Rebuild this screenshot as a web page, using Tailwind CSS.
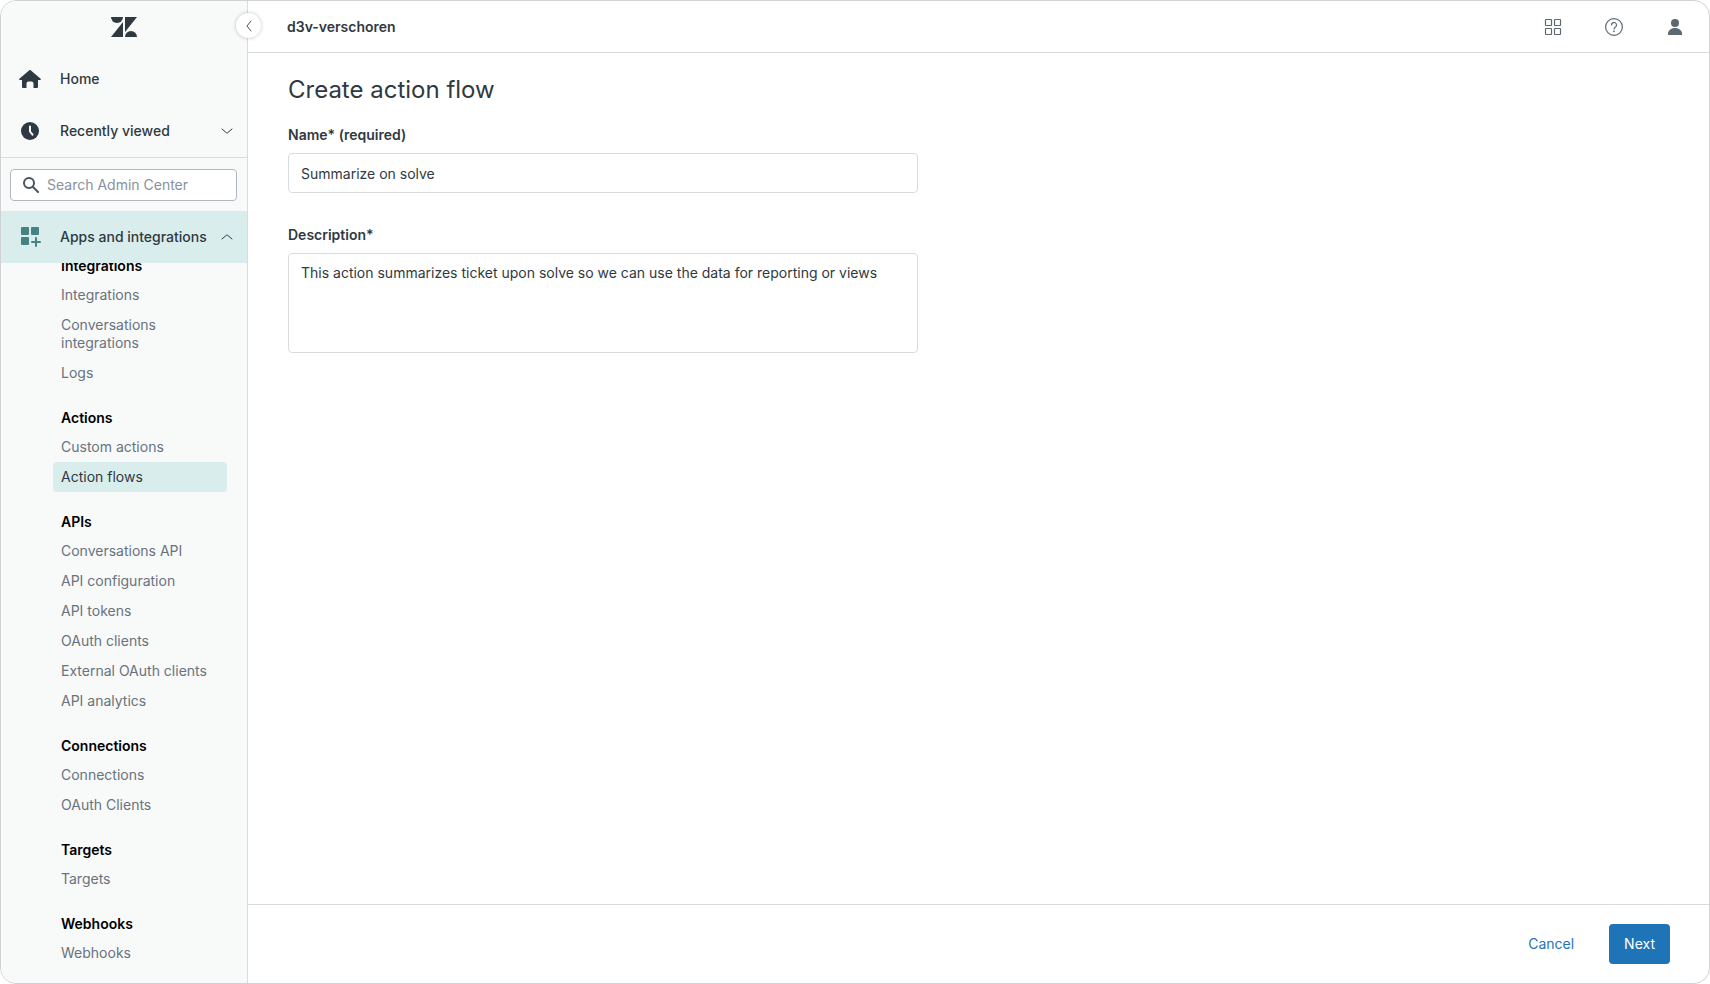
<!DOCTYPE html>
<html lang="en">

<head>
  <meta charset="UTF-8">
  <title>Create action flow - Admin Center</title>
  <meta name="viewport" content="width=device-width, initial-scale=1.0">
  <script src="https://cdn.jsdelivr.net/npm/@tailwindcss/browser@4"></script>
</head>

<body class="bg-white font-['Inter',sans-serif] text-sm text-[#2f3941]">
  <div class="flex h-screen overflow-hidden rounded-2xl border border-[#d0d2d3] bg-white">

    <!-- Sidebar -->
    <aside class="relative flex w-[247px] shrink-0 flex-col border-r border-[#d8dcde] bg-[#f8f9f9]">
      <div class="flex h-[52px] shrink-0 items-center justify-center">
        <svg class="h-5 w-[26px]" viewBox="0 0 26 20" fill="#2f3941" role="img" aria-label="Zendesk">
          <path d="M0 0h12a6 6 0 0 1-12 0z" />
          <path d="M12 5v15H0z" />
          <path d="M14 0h12L14 15z" />
          <path d="M14 20a6 6 0 0 1 12 0z" />
        </svg>
      </div>
      <button type="button" aria-label="Collapse sidebar" class="absolute top-3 -right-[14px] z-10 flex size-[25px] items-center justify-center rounded-full bg-white shadow-[0_0_3px_1px_rgba(47,57,65,0.18)]">
        <svg class="size-3" viewBox="0 0 12 12" fill="none" stroke="#49545c" stroke-linecap="round"><path d="M8 1 4 6l4 5" /></svg>
      </button>

      <a href="#" class="flex h-[52px] shrink-0 items-center gap-[19px] pl-[18px] font-medium">
        <svg class="h-[18px] w-[22px]" viewBox="0 0 22 18" fill="#2f3941">
          <path d="M10.300.3a1 1 0 0 1 1.400 0l9.900 8.500c.6.500.2 1.200-.4 1.200H19v7a1 1 0 0 1-1 1h-3.500v-4.500a2 2 0 0 0-2-2h-3a2 2 0 0 0-2 2V18H4a1 1 0 0 1-1-1v-7H.8C.2 10-.2 9.300.4 8.800z" />
        </svg>
        <span>Home</span>
      </a>
      <button type="button" class="flex h-[52px] shrink-0 items-center gap-[19px] pr-[14px] pl-[18px] text-left font-medium">
        <svg class="h-[18px] w-[22px]" viewBox="0 0 22 18" fill="none">
          <circle cx="11" cy="9" r="9" fill="#2f3941" />
          <path d="M11 4.500V9.500l2.500 3.200" stroke="#f8f9f9" stroke-width="2" stroke-linecap="round" stroke-linejoin="round" />
        </svg>
        <span class="flex-1">Recently viewed</span>
        <svg class="h-[6px] w-3" viewBox="0 0 12 6" fill="none" stroke="#2f3941" stroke-linecap="round" stroke-linejoin="round"><path d="M1 1l4.300 3.700q.7.600 1.400 0L11 1" /></svg>
      </button>

      <div class="flex h-[54px] shrink-0 items-center border-t border-[#d8dcde] pr-[10px] pl-[9px]">
        <label class="flex h-8 w-full items-center gap-2 rounded border border-[#b0b8be] bg-white pl-3">
          <svg class="size-4 shrink-0" viewBox="0 0 16 16" fill="none" stroke="#49545c" stroke-width="2" stroke-linecap="round">
            <circle cx="6" cy="6" r="5" />
            <path d="M10 10l5 5" />
          </svg>
          <input type="search" aria-label="Search Admin Center" placeholder="Search Admin Center" class="w-full min-w-0 bg-transparent outline-none placeholder:text-[#87929d]">
        </label>
      </div>

      <button type="button" class="flex h-[52px] shrink-0 items-center gap-[19px] bg-[#daeded] pr-[14px] pl-[18px] text-left font-medium">
        <svg class="h-5 w-[22px]" viewBox="0 0 22 20" fill="#468282">
          <rect x="2" y="0" width="8" height="8" rx="1" />
          <rect x="12" y="0" width="8" height="8" rx="1" />
          <rect x="2" y="10" width="8" height="8" rx="1" />
          <path d="M17 11v8M13 15h8" stroke="#468282" stroke-width="2" stroke-linecap="round" />
        </svg>
        <span class="min-w-0 flex-1 whitespace-nowrap">Apps and integrations</span>
        <svg class="h-[6px] w-3 shrink-0" viewBox="0 0 12 6" fill="none" stroke="#2f3941" stroke-linecap="round" stroke-linejoin="round"><path d="M1 5l4.300-3.700q.7-.6 1.400 0L11 5" /></svg>
      </button>

      <!-- Sub navigation, scrolled slightly under the section header -->
      <nav class="min-h-0 flex-1 overflow-hidden pr-5 pl-[52px] leading-[18px] text-[#68737d]">
        <div id="subnav" class="-mt-[11px] flex flex-col gap-4"></div>
      </nav>
    </aside>

    <!-- Content -->
    <div class="flex min-w-0 flex-1 flex-col">
      <header class="flex h-[52px] shrink-0 items-center justify-between border-b border-[#d8dcde] pr-[25px] pl-[39px]">
        <span class="font-semibold">d3v-verschoren</span>
        <div class="flex items-center gap-[43px]">
          <button type="button" aria-label="Products">
            <svg class="size-[18px]" viewBox="0 0 18 18" fill="none" stroke="#5c6970" stroke-width="1.200">
              <rect x="1.500" y="1.500" width="6" height="6" rx=".5" />
              <rect x="10.500" y="1.500" width="6" height="6" rx=".5" />
              <rect x="1.500" y="10.500" width="6" height="6" rx=".5" />
              <rect x="10.500" y="10.500" width="6" height="6" rx=".5" />
            </svg>
          </button>
          <button type="button" aria-label="Help">
            <svg class="size-[18px]" viewBox="0 0 18 18" fill="none" stroke="#5c6970" stroke-width="1.200" stroke-linecap="round">
              <circle cx="9" cy="9" r="8.400" />
              <path d="M6.500 7a2.500 2.500 0 1 1 4 2c-.9.600-1.500 1-1.500 2" />
              <circle cx="9" cy="13.300" r=".9" fill="#5c6970" stroke="none" />
            </svg>
          </button>
          <button type="button" aria-label="Profile">
            <svg class="size-[18px]" viewBox="0 0 18 18" fill="#5c6970">
              <circle cx="9" cy="5" r="4" />
              <path d="M2 17v-1.500C2 12.500 5 10 9 10s7 2.500 7 5.500V17z" />
            </svg>
          </button>
        </div>
      </header>

      <main class="min-h-0 flex-1 px-10 pt-[21px]">
        <h1 class="text-2xl">Create action flow</h1>
        <form id="flow" class="mt-[19px] flex max-w-[630px] flex-col gap-8">
          <div class="flex flex-col gap-2">
            <label for="name" class="font-semibold">Name* (required)</label>
            <input id="name" type="text" required value="Summarize on solve" class="h-10 rounded border border-[#d8dcde] px-3 outline-none">
          </div>
          <div class="flex flex-col gap-2">
            <label for="description" class="font-semibold">Description*</label>
            <textarea id="description" class="h-[100px] resize-none rounded border border-[#d8dcde] px-3 py-[9px] outline-none">This action summarizes ticket upon solve so we can use the data for reporting or views</textarea>
          </div>
        </form>
      </main>

      <footer class="flex h-[79px] shrink-0 items-center justify-end gap-5 border-t border-[#d8dcde] pr-[39px]">
        <button type="button" class="h-10 px-[15px] text-[#1f73b7]">Cancel</button>
        <button type="submit" form="flow" class="h-10 rounded bg-[#1f73b7] px-[15px] text-white">Next</button>
      </footer>
    </div>
  </div>

  <script>
    const groups = [
      { title: "Integrations", items: ["Integrations", "Conversations integrations", "Logs"] },
      { title: "Actions", items: ["Custom actions", "Action flows"] },
      { title: "APIs", items: ["Conversations API", "API configuration", "API tokens", "OAuth clients", "External OAuth clients", "API analytics"] },
      { title: "Connections", items: ["Connections", "OAuth Clients"] },
      { title: "Targets", items: ["Targets"] },
      { title: "Webhooks", items: ["Webhooks"] }
    ];
    const current = "Action flows";

    document.getElementById("subnav").innerHTML = groups.map(group => `
      <section>
        <h2 class="h-7 px-2 py-[5px] font-semibold text-black">${group.title}</h2>
        <ul>
          ${group.items.map(item => item === current
            ? `<li><a href="#" aria-current="page" class="block rounded bg-[#daeded] px-2 py-[6px] text-[#2f3941]">${item}</a></li>`
            : `<li><a href="#" class="block px-2 py-[6px]">${item}</a></li>`).join("")}
        </ul>
      </section>`).join("");
  </script>
</body>
</html>
